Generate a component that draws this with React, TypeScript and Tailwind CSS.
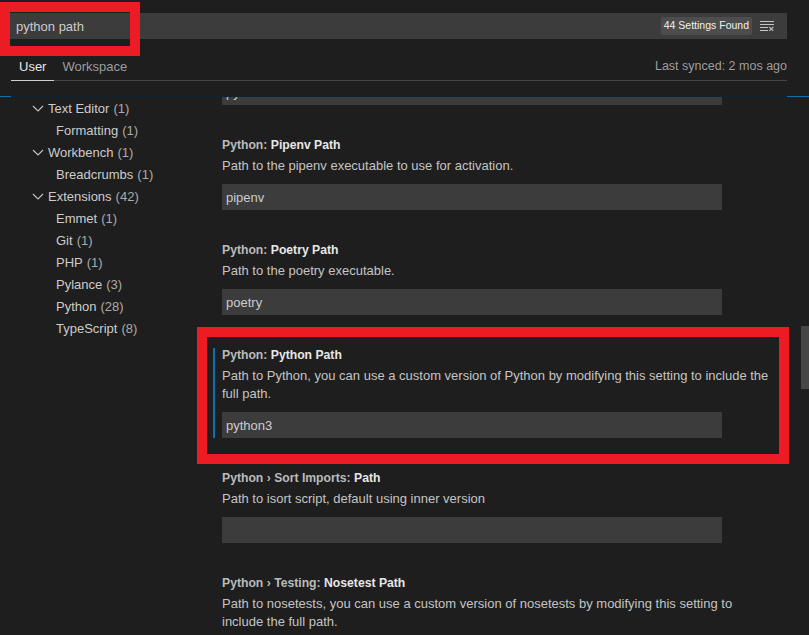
import React from 'react';

type TocItem = { label: string; count: number; level: 1 | 2 };

const toc: TocItem[] = [
  { label: 'Text Editor', count: 1, level: 1 },
  { label: 'Formatting', count: 1, level: 2 },
  { label: 'Workbench', count: 1, level: 1 },
  { label: 'Breadcrumbs', count: 1, level: 2 },
  { label: 'Extensions', count: 42, level: 1 },
  { label: 'Emmet', count: 1, level: 2 },
  { label: 'Git', count: 1, level: 2 },
  { label: 'PHP', count: 1, level: 2 },
  { label: 'Pylance', count: 3, level: 2 },
  { label: 'Python', count: 28, level: 2 },
  { label: 'TypeScript', count: 8, level: 2 },
];

const ChevronDown = () => (
  <svg width="16" height="16" viewBox="0 0 16 16" className="shrink-0">
    <polyline points="3,6 8,11 13,6" fill="none" stroke="#c5c5c5" strokeWidth="1.1" />
  </svg>
);

const ClearAll = () => (
  <svg width="16" height="16" viewBox="0 0 16 16" fill="#c5c5c5">
    <path d="M10 12.6l.7.7 1.6-1.6 1.6 1.6.8-.7L13 11l1.7-1.6-.8-.8-1.6 1.7-1.6-1.7-.7.8 1.6 1.6-1.6 1.6zM1 4h14V3H1v1zm0 3h14V6H1v1zm8 2.5V9H1v1h8v-.5zM9 13v-1H1v1h8z" />
  </svg>
);

interface SettingProps {
  category: string;
  label: string;
  lines: string[];
  value: string;
  children?: React.ReactNode;
}

const Setting: React.FC<SettingProps> = ({ category, label, lines, value, children }) => (
  <div className="relative pt-[30px]">
    {children}
    <div className="h-[18px] pt-[2px] leading-[16px] text-[12.2px] font-bold whitespace-nowrap">
      <span className="text-[#bbbbbb]">{category}</span>
      <span className="text-[#e7e7e7]">{label}</span>
    </div>
    <div className="mt-[3px] text-[13px] text-[#c4c4c4] whitespace-nowrap">
      {lines.map((l, i) => (
        <div key={i} className="h-[18px] pt-[2px] leading-[16px]">
          {l}
        </div>
      ))}
    </div>
    <div className="mt-[10px] w-[500px] h-[26px] bg-[#3c3c3c] flex items-center pl-[4px] text-[13px] text-[#cccccc]">
      <span className="pt-[2px]">{value}</span>
    </div>
  </div>
);

export default function App() {
  return (
    <div
      className="relative w-[809px] h-[635px] overflow-hidden bg-[#1e1e1e] text-[#cccccc]"
      style={{ fontFamily: '"Liberation Sans", Arial, sans-serif' }}
    >
      {/* Header */}
      <div className="relative pt-[13px] pl-[10px] pr-[22px]">
        <div className="h-[26px] bg-[#3c3c3c] flex items-center pl-[6px] pr-[12px]">
          <span className="pt-[2px] text-[13px] text-[#cccccc]">python path</span>
          <span className="ml-auto h-[18px] px-[3px] flex items-center rounded-[2px] bg-[#4d4d4d] text-[10.5px] text-[#f0f0f0] whitespace-nowrap">
            44 Settings Found
          </span>
          <span className="ml-[7px] flex items-center">
            <ClearAll />
          </span>
        </div>

        {/* Tabs */}
        <div className="ml-[1px] h-[42px] flex items-end border-b border-[#454545]">
          <div className="-mb-px px-[8px] pb-[4px] leading-[18px] text-[13px] text-[#e7e7e7] border-b border-[#d0d0d0]">
            User
          </div>
          <div className="-mb-px px-[8px] pb-[4px] leading-[18px] text-[13px] text-[#9d9d9d] border-b border-transparent">
            Workspace
          </div>
          <div className="ml-auto pb-[5px] leading-[18px] text-[12.5px] text-[#9d9d9d] whitespace-nowrap">
            Last synced: 2 mos ago
          </div>
        </div>

        <div className="absolute left-0 top-[2px] w-[140px] h-[54px] border-[10px] border-[#ed1c24]" />
      </div>

      {/* Scroll shadow line */}
      <div className="mt-[15px] flex h-[1px]">
        <div className="w-[11px] bg-[#0e70b0]" />
        <div className="flex-1 bg-[#0c2333]" />
        <div className="w-[22px] bg-[#0e70b0]" />
      </div>

      {/* Body */}
      <div className="flex">
        {/* TOC */}
        <div className="w-[222px] shrink-0">
          {toc.map((t) => (
            <div
              key={t.label}
              className={`h-[22px] flex items-center text-[13px] whitespace-nowrap ${t.level === 1 ? 'pl-[30px]' : 'pl-[56px]'}`}
            >
              {t.level === 1 && (
                <span className="mr-[2px] flex items-center">
                  <ChevronDown />
                </span>
              )}
              <span className="pt-[2px] text-[#cccccc]">{t.label}</span>
              <span className="pt-[2px] ml-[4px] text-[#ababab]">({t.count})</span>
            </div>
          ))}
        </div>

        {/* Settings list */}
        <div className="flex-1">
          <div className="h-[8px] w-[500px] overflow-hidden bg-[#3c3c3c]">
            <div className="-mt-[18px] h-[26px] flex items-center pl-[4px] text-[13px] text-[#cccccc]">
              <span className="pt-[2px]">pylint</span>
            </div>
          </div>

          <Setting
            category="Python: "
            label="Pipenv Path"
            lines={['Path to the pipenv executable to use for activation.']}
            value="pipenv"
          />
          <Setting
            category="Python: "
            label="Poetry Path"
            lines={['Path to the poetry executable.']}
            value="poetry"
          />
          <Setting
            category="Python: "
            label="Python Path"
            lines={[
              'Path to Python, you can use a custom version of Python by modifying this setting to include the',
              'full path.',
            ]}
            value="python3"
          >
            <div className="absolute left-[-9px] top-[33px] w-[2px] h-[90px] bg-[#0e70b0]" />
            <div className="absolute left-[-25px] top-[12px] w-[592px] h-[137px] border-[10px] border-[#ed1c24]" />
          </Setting>
          <Setting
            category="Python › Sort Imports: "
            label="Path"
            lines={['Path to isort script, default using inner version']}
            value=""
          />
          <Setting
            category="Python › Testing: "
            label="Nosetest Path"
            lines={[
              'Path to nosetests, you can use a custom version of nosetests by modifying this setting to',
              'include the full path.',
            ]}
            value=""
          />
        </div>
      </div>

      {/* Scrollbar slider */}
      <div className="absolute right-0 top-[326px] w-[8px] h-[63px] bg-[#464646]" />
    </div>
  );
}
